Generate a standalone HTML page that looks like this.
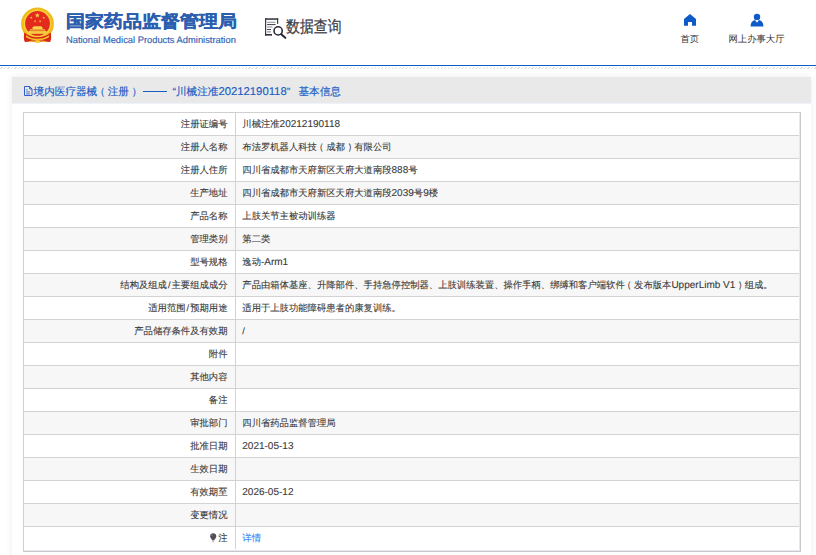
<!DOCTYPE html>
<html><head><meta charset="utf-8">
<style>
*{margin:0;padding:0;box-sizing:border-box}
html,body{width:816px;height:555px;overflow:hidden;background:#fff;font-family:"Liberation Sans",sans-serif;text-rendering:geometricPrecision}
.ab{position:absolute;white-space:nowrap}
#emb{position:absolute;left:19px;top:6px;width:38px;height:38px}
#t1{left:66px;top:8.5px;font-size:19px;font-weight:bold;color:#2b5eae;line-height:26px;transform:scaleY(0.9);transform-origin:0 21px;-webkit-text-stroke:0.35px #2b5eae}
#t2{left:66px;top:34px;font-size:9.35px;color:#3063b3;line-height:12px;-webkit-text-stroke:0.15px #3063b3}
#qi{position:absolute;left:264px;top:17px;width:24px;height:23px}
#qt{left:286px;top:15px;font-size:13.9px;color:#3b3b45;line-height:20px;transform:scaleY(1.175);transform-origin:0 5.4px;-webkit-text-stroke:0.2px #3b3b45}
.nt{font-size:9.33px;color:#333;line-height:12px}
#bl{position:absolute;left:0;top:65px;width:816px;height:1px;background:#0b5cc4}
#hatch{position:absolute;left:0;top:67px;width:816px;height:2px;background:repeating-linear-gradient(-45deg,#fff 0 0.7px,#e0e0e0 0.7px 1.5px,#fff 1.5px 2.47px)}
#panel{position:absolute;left:12px;top:77px;width:799px;height:520px;background:#fff;box-shadow:0 0 7px rgba(0,0,0,0.08)}
#ph{position:absolute;left:0;top:0;width:799px;height:27px;background:#e9e9e9;border-bottom:1px solid #eef2fa}
.pt{font-size:10.6px;color:#1b5cc4;line-height:14px;-webkit-text-stroke:0.15px #1b5cc4}
.pt .lt{font-size:11.3px}
#tbl{position:absolute;left:11px;top:35px;width:778px;height:440px;border:1px solid #d0d0d0;border-right-color:#c8c8c8;border-bottom-color:#c8c8c8}
#tbl .ir{position:absolute;left:775px;top:0;width:1px;height:438px;background:#e6e9f2}
#tbl .ib{position:absolute;left:0;top:437px;width:776px;height:1px;background:#e6e9f2}
.row{position:absolute;left:0;width:776px;height:23px;border-bottom:1px solid #d3d3d3;font-size:9.33px;color:#383838;-webkit-text-stroke:0.1px #383838}
.row.g{background:#f7f7f7}
.row .l{position:absolute;left:0;top:0.3px;width:212px;height:22px;border-right:1px solid #d3d3d3;text-align:right;padding-right:7.5px;line-height:22px}
.row .v{position:absolute;left:218.3px;top:0.3px;height:22px;line-height:22px}
.lat{font-size:10px}
a{color:#3d8af7;text-decoration:none;-webkit-text-stroke:0.15px #3d8af7}
.sl{margin:0 1px}
.po{position:relative;left:-2.5px}.pc{position:relative;left:2.5px}
</style></head><body>
<svg id="emb" viewBox="0 0 38 38">
  <circle cx="18.5" cy="17.9" r="16.4" fill="#f0bc1c"/>
  <circle cx="18.5" cy="17.6" r="13.8" fill="#f7d13c"/>
  <circle cx="18.5" cy="17.4" r="12.4" fill="#e32a1c"/>
  <path d="M5.3 26.5 Q4.2 32.5 5.8 36 L12.5 35.4 Q18.5 37 24.5 35.4 L31.2 36 Q32.8 32.5 31.7 26.5 Q26 31.3 18.5 31.3 Q11 31.3 5.3 26.5Z" fill="#d92617"/>
  <path d="M7 29.3 Q12 32.8 18.5 32.8 Q25 32.8 30 29.3 L30.2 31 Q25 34.4 18.5 34.4 Q12 34.4 6.8 31Z" fill="#f2c32c"/>
  <path d="M10 35.2 Q14 33.6 18.5 35.2 Q23 33.6 27 35.2 L26 36.2 Q22.5 35 18.5 36.3 Q14.5 35 11 36.2Z" fill="#f2c32c"/>
  <ellipse cx="18.5" cy="35.4" rx="2.6" ry="1.5" fill="#f4cc3a"/>
  <path d="M13.5 21.2 L15 20.2 H22 L23.5 21.2 V23 H13.5Z" fill="#f6d447"/>
  <rect x="11" y="23.3" width="15" height="1.1" fill="#f6d447"/>
  <rect x="9.5" y="24.8" width="18" height="3" fill="#f6d447"/>
  <rect x="12" y="25.6" width="13" height="0.6" fill="#e9a52a"/>
  <polygon points="18.30,6.70 18.93,8.53 20.87,8.57 19.33,9.73 19.89,11.58 18.30,10.48 16.71,11.58 17.27,9.73 15.73,8.57 17.67,8.53" fill="#f8d640"/>
  <polygon points="12.55,10.40 12.62,11.36 13.55,11.63 12.65,11.99 12.68,12.96 12.06,12.22 11.15,12.55 11.66,11.73 11.07,10.96 12.01,11.20" fill="#f8d640"/>
  <polygon points="24.45,10.40 24.99,11.20 25.93,10.96 25.34,11.73 25.85,12.55 24.94,12.22 24.32,12.96 24.35,11.99 23.45,11.63 24.38,11.36" fill="#f8d640"/>
  <polygon points="16.78,14.03 16.59,14.98 17.42,15.48 16.46,15.60 16.24,16.54 15.83,15.67 14.87,15.75 15.57,15.09 15.20,14.20 16.04,14.66" fill="#f8d640"/>
  <polygon points="20.43,14.03 21.16,14.66 22.00,14.20 21.63,15.09 22.33,15.75 21.37,15.67 20.96,16.54 20.74,15.60 19.78,15.48 20.61,14.98" fill="#f8d640"/>
</svg>
<div id="t1" class="ab">国家药品监督管理局</div>
<div id="t2" class="ab">National Medical Products Administration</div>
<svg id="qi" viewBox="0 0 24 23">
  <rect x="1" y="1.3" width="13.2" height="1.5" fill="#2f2f3d"/>
  <rect x="1" y="1.3" width="1.2" height="17.3" fill="#3a3a48"/>
  <rect x="1" y="17" width="7" height="1.6" fill="#2f2f3d"/>
  <rect x="13" y="1.3" width="1.2" height="5.6" fill="#3a3a48"/>
  <path d="M3.1 5.3 H11.6 M3.1 10 H8.5 M3.1 14.9 H6.9" stroke="#8a8a94" stroke-width="1.1"/>
  <path d="M3.1 7.6 H11.6 M3.1 12.5 H6.9" stroke="#3a3a48" stroke-width="1"/>
  <circle cx="14.15" cy="13.9" r="4.1" fill="#fff" stroke="#2a2a38" stroke-width="1.6"/>
  <path d="M17.2 17.2 L21.3 20.8" stroke="#2a2a38" stroke-width="2.1" stroke-linecap="round"/>
</svg>
<div id="qt" class="ab">数据查询</div>
<svg style="position:absolute;left:683px;top:13px" width="14" height="14" viewBox="0 0 14 14">
  <path d="M7 1 L13 5.9 V12.7 H9 V9.1 H5 V12.7 H1 V5.9Z" fill="#0d5bc9"/>
</svg>
<div class="ab nt" style="left:680.5px;top:32.7px">首页</div>
<svg style="position:absolute;left:749px;top:12px" width="16" height="16" viewBox="0 0 16 16">
  <circle cx="8" cy="4.9" r="3.2" fill="#0f5ac9"/>
  <path d="M1.6 14.6 Q1.6 9 6.1 8.1 L8 10.7 L9.9 8.1 Q14.4 9 14.4 14.6Z" fill="#0f5ac9"/>
</svg>
<div class="ab nt" style="left:728.5px;top:32.7px">网上办事大厅</div>
<div id="bl"></div>
<div id="hatch"></div>
<div id="panel">
  <div id="ph"></div>
  <div id="tbl">
    <div class="row" style="top:0"><div class="l">注册证编号</div><div class="v">川械注准<span class="lat">20212190118</span></div></div>
    <div class="row g" style="top:23px"><div class="l">注册人名称</div><div class="v">布法罗机器人科技<span class="po">（</span>成都<span class="pc">）</span>有限公司</div></div>
    <div class="row" style="top:46px"><div class="l">注册人住所</div><div class="v">四川省成都市天府新区天府大道南段<span class="lat">888</span>号</div></div>
    <div class="row g" style="top:69px"><div class="l">生产地址</div><div class="v">四川省成都市天府新区天府大道南段<span class="lat">2039</span>号<span class="lat">9</span>楼</div></div>
    <div class="row" style="top:92px"><div class="l">产品名称</div><div class="v">上肢关节主被动训练器</div></div>
    <div class="row g" style="top:115px"><div class="l">管理类别</div><div class="v">第二类</div></div>
    <div class="row" style="top:138px"><div class="l">型号规格</div><div class="v">逸动<span class="lat">-Arm1</span></div></div>
    <div class="row g" style="top:161px"><div class="l">结构及组成<span class="sl">/</span>主要组成成分</div><div class="v">产品由箱体基座、升降部件、手持急停控制器、上肢训练装置、操作手柄、绑缚和客户端软件<span class="po">（</span>发布版本<span class="lat">UpperLimb V1</span><span class="pc">）</span>组成。</div></div>
    <div class="row" style="top:184px"><div class="l">适用范围<span class="sl">/</span>预期用途</div><div class="v">适用于上肢功能障碍患者的康复训练。</div></div>
    <div class="row g" style="top:207px"><div class="l">产品储存条件及有效期</div><div class="v">/</div></div>
    <div class="row" style="top:230px"><div class="l">附件</div></div>
    <div class="row g" style="top:253px"><div class="l">其他内容</div></div>
    <div class="row" style="top:276px"><div class="l">备注</div></div>
    <div class="row g" style="top:299px"><div class="l">审批部门</div><div class="v">四川省药品监督管理局</div></div>
    <div class="row" style="top:322px"><div class="l">批准日期</div><div class="v"><span class="lat">2021-05-13</span></div></div>
    <div class="row g" style="top:345px"><div class="l">生效日期</div></div>
    <div class="row" style="top:368px"><div class="l">有效期至</div><div class="v"><span class="lat">2026-05-12</span></div></div>
    <div class="row g" style="top:391px"><div class="l">变更情况</div></div>
    <div class="row" style="top:414px;height:24px;border-bottom:0"><div class="l">注</div><svg style="position:absolute;left:186px;top:6.3px" width="7" height="10" viewBox="0 0 7 10"><path d="M3.2 0.2 C1.4 0.2 0.1 1.5 0.1 3.2 C0.1 4.6 1.1 5.4 1.7 6.3 L2.1 7.2 H4.3 L4.7 6.3 C5.3 5.4 6.3 4.6 6.3 3.2 C6.3 1.5 5 0.2 3.2 0.2Z" fill="#4f4f55"/><path d="M2.2 7.9 H4.2 M2.5 8.7 H3.9" stroke="#9a9aa0" stroke-width="0.8"/><circle cx="2" cy="2.2" r="0.7" fill="#8c8c96"/></svg><div class="v"><a>详情</a></div></div>
    <div class="ir"></div><div class="ib"></div>
  </div>
</div>
<svg style="position:absolute;left:24px;top:86px" width="9" height="10" viewBox="0 0 9 10"><path d="M0.5 0.5 H5.6 L8 2.9 V9.5 H0.5Z M5.6 0.5 V2.9 H8" fill="none" stroke="#2e5fca" stroke-width="1"/><path d="M2 3.8 H3.6 M2 5.9 H6 M2 7.9 H6" stroke="#4a62c8" stroke-width="0.9"/></svg>
<div class="ab pt" style="left:33.6px;top:84.5px">境内医疗器械<span class="po">（</span>注册<span class="pc">）</span></div>
<div style="position:absolute;left:143px;top:91px;width:24px;height:1px;background:#1b5cc4"></div>
<div class="ab pt" style="left:172.5px;top:84.5px">“川械注准<span class="lt">20212190118</span>”</div>
<div class="ab pt" style="left:298.5px;top:84.5px">基本信息</div>
</body></html>
